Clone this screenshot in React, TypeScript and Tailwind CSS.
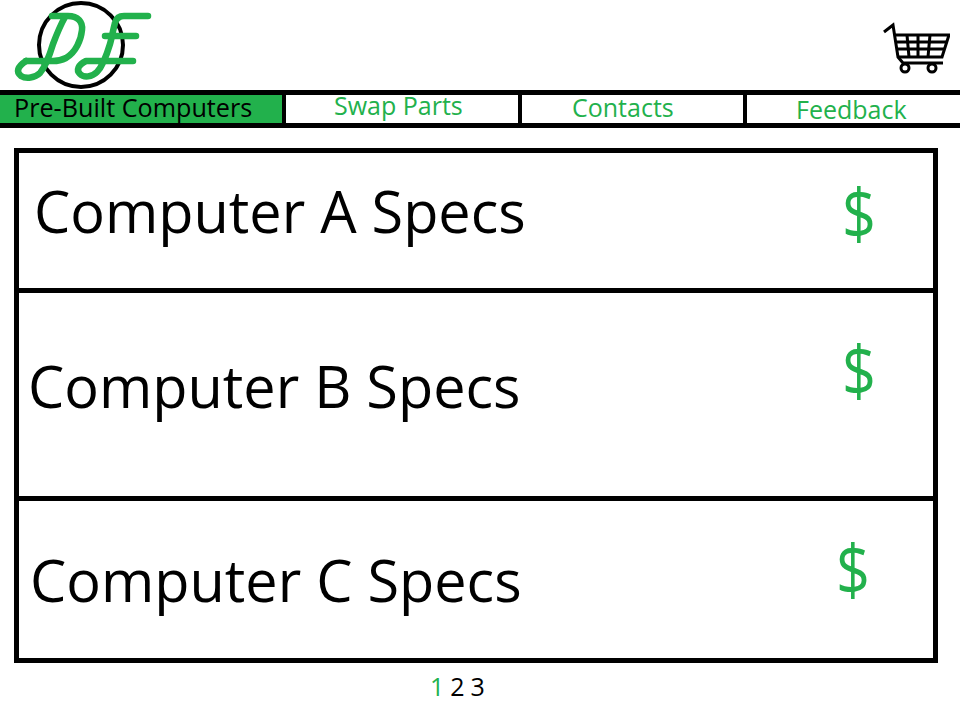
const navItems = [
  { label: "Swap Parts", width: "w-[236px]", pad: "pl-[48px] pb-[8px]" },
  { label: "Contacts", width: "w-[225px]", pad: "pl-[50px] pb-[3px]" },
  { label: "Feedback", width: "flex-1", pad: "pl-[49px]" },
];

const computers = [
  { name: "Computer A", height: "h-[140px]", namePad: "pl-[15px] pt-[29px]", pricePad: "pl-[23px] pt-[24px]" },
  { name: "Computer B", height: "h-[208px]", namePad: "pl-[9px] pt-[64px]", pricePad: "pl-[23px] pt-[41px]" },
  { name: "Computer C", height: "h-[157px]", namePad: "pl-[11px] pt-[50px]", pricePad: "pl-[17px] pt-[32px]" },
];

function Logo() {
  return (
    <svg width="160" height="90" viewBox="0 0 160 90" fill="none" className="block">
      <circle cx="81" cy="45" r="42" stroke="#000" strokeWidth="4" />
      <g stroke="#22b14c" strokeWidth="6.5" strokeLinecap="round" strokeLinejoin="round">
        {/* D */}
        <path d="M52 16 L68 16 C78 16 83 22 82 30 C81 40 76 52 66 58 C62 60 58 61 53 61 L26 61" />
        <path d="M65 17 C60 26 56 36 53 44 C50 54 46 66 40 73 C35 78 26 79 21 76 C16 72 17 67 26 61" />
        {/* F */}
        <path d="M148 16 L124 16 C119 16 116 19 115 23 C113 30 112 37 110 44 C107 54 103 66 97 72 C92 77 84 78 80 74 C76 70 78 65 86 61 L133 61" />
        <path d="M105 36 L136 36" />
      </g>
    </svg>
  );
}

function Cart() {
  return (
    <svg width="68" height="54" viewBox="0 0 68 54" fill="none" stroke="#000" className="block">
      <path d="M2 12 L11 5 L16 37 L21 43 L61 43" strokeWidth="3" />
      <path d="M13 15 L67 15 L60 37 L16 37" strokeWidth="3" />
      <path d="M15 22 L64 22 M16 29 L62 29" strokeWidth="3" />
      <path d="M25 15 L27 37 M36 15 L36 37 M48 15 L46 37" strokeWidth="3" />
      <circle cx="23" cy="48" r="4" strokeWidth="3" />
      <circle cx="50" cy="48" r="4" strokeWidth="3" />
    </svg>
  );
}

export default function App() {
  return (
    <div className="w-[960px] h-[712px] bg-white overflow-hidden font-['Open_Sans',sans-serif] text-black">
      <header className="h-[90px] flex justify-between pr-[10px]">
        <Logo />
        <div className="pt-[20px]">
          <Cart />
        </div>
      </header>

      <nav className="h-[38px] flex border-y-[5px] border-black">
        <div className="w-[282px] bg-[#22b14c] flex items-center pl-[14px] pb-[3px] text-[25.2px] leading-none">
          Pre-Built Computers
        </div>
        {navItems.map((item) => (
          <div
            key={item.label}
            className={`${item.width} ${item.pad} border-l-[4px] border-black flex items-center text-[25px] leading-none text-[#22b14c]`}
          >
            {item.label}
          </div>
        ))}
      </nav>

      <main className="mt-[20px] mx-[14px] w-[924px] h-[515px] border-[5px] border-black flex flex-col divide-y-[5px] divide-black">
        {computers.map((c) => (
          <div key={c.name} className={`${c.height} flex`}>
            <div className={`${c.namePad} w-[800px] shrink-0 whitespace-nowrap text-[57.6px] leading-none`}>{c.name} Specs</div>
            <div className={`${c.pricePad} text-[70px] leading-none text-[#22b14c]`}>
              <div className="scale-x-[0.85] origin-left">$</div>
            </div>
          </div>
        ))}
      </main>

      <div className="flex gap-[6px] pt-[11px] pl-[430px] text-[25px] leading-none">
        <span className="text-[#22b14c]">1</span>
        <span>2</span>
        <span>3</span>
      </div>
    </div>
  );
}
